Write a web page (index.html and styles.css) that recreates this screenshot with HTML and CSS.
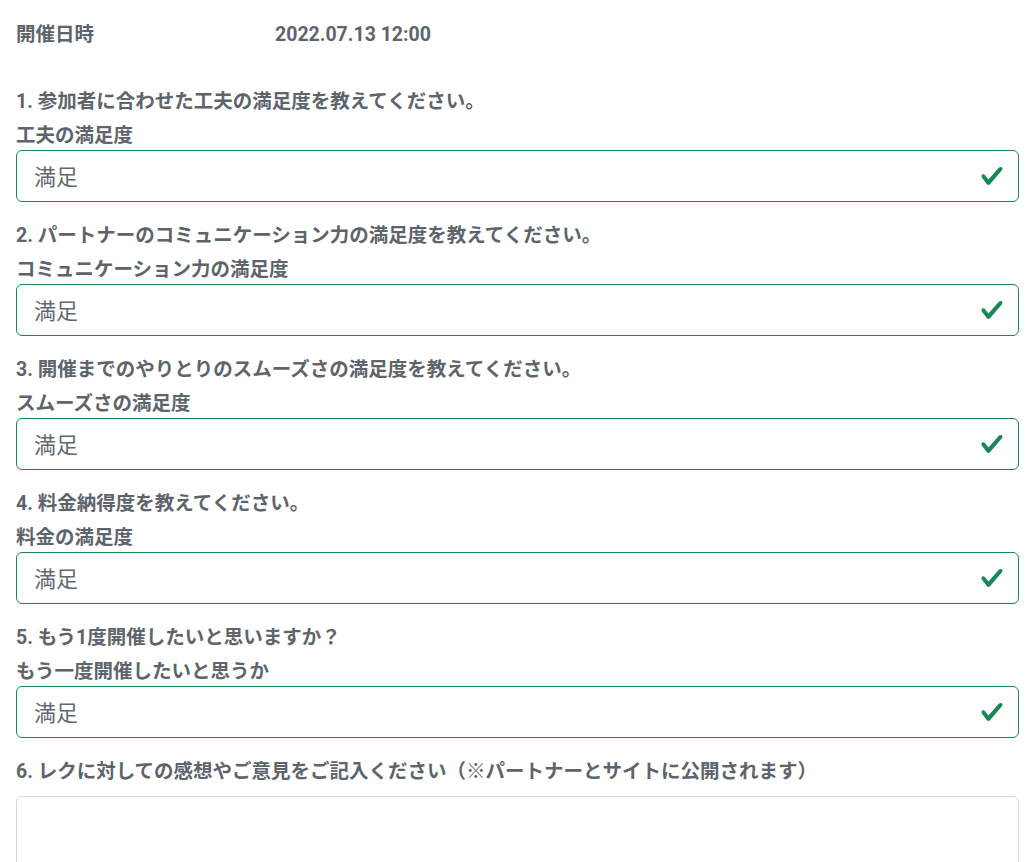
FILE: index.html
```html
<!DOCTYPE html>
<html lang="ja">
<head>
    <meta charset="UTF-8">
    <meta name="viewport" content="width=device-width, initial-scale=1.0">
    <title>アンケート</title>
    <link rel="stylesheet" href="styles.css">
</head>
<body>
    <div class="page">
        <div class="event-date">
            <span class="event-label">開催日時</span>
            <span class="event-value">2022.07.13 12:00</span>
        </div>

        <div class="question">
            <p class="question-title">1. 参加者に合わせた工夫の満足度を教えてください。</p>
            <label class="field-label">工夫の満足度</label>
            <div class="answer">
                <span>満足</span>
                <svg class="check" viewBox="0 0 8 8"><path d="M2.3 6.73.6 4.53c-.4-1.04.46-1.4 1.1-.8l1.1 1.4 3.4-3.8c.6-.63 1.6-.27 1.2.7l-4 4.6c-.43.5-.8.4-1.1.1z"/></svg>
            </div>
        </div>

        <div class="question">
            <p class="question-title">2. パートナーのコミュニケーション力の満足度を教えてください。</p>
            <label class="field-label">コミュニケーション力の満足度</label>
            <div class="answer">
                <span>満足</span>
                <svg class="check" viewBox="0 0 8 8"><path d="M2.3 6.73.6 4.53c-.4-1.04.46-1.4 1.1-.8l1.1 1.4 3.4-3.8c.6-.63 1.6-.27 1.2.7l-4 4.6c-.43.5-.8.4-1.1.1z"/></svg>
            </div>
        </div>

        <div class="question">
            <p class="question-title">3. 開催までのやりとりのスムーズさの満足度を教えてください。</p>
            <label class="field-label">スムーズさの満足度</label>
            <div class="answer">
                <span>満足</span>
                <svg class="check" viewBox="0 0 8 8"><path d="M2.3 6.73.6 4.53c-.4-1.04.46-1.4 1.1-.8l1.1 1.4 3.4-3.8c.6-.63 1.6-.27 1.2.7l-4 4.6c-.43.5-.8.4-1.1.1z"/></svg>
            </div>
        </div>

        <div class="question">
            <p class="question-title">4. 料金納得度を教えてください。</p>
            <label class="field-label">料金の満足度</label>
            <div class="answer">
                <span>満足</span>
                <svg class="check" viewBox="0 0 8 8"><path d="M2.3 6.73.6 4.53c-.4-1.04.46-1.4 1.1-.8l1.1 1.4 3.4-3.8c.6-.63 1.6-.27 1.2.7l-4 4.6c-.43.5-.8.4-1.1.1z"/></svg>
            </div>
        </div>

        <div class="question">
            <p class="question-title">5. もう1度開催したいと思いますか？</p>
            <label class="field-label">もう一度開催したいと思うか</label>
            <div class="answer">
                <span>満足</span>
                <svg class="check" viewBox="0 0 8 8"><path d="M2.3 6.73.6 4.53c-.4-1.04.46-1.4 1.1-.8l1.1 1.4 3.4-3.8c.6-.63 1.6-.27 1.2.7l-4 4.6c-.43.5-.8.4-1.1.1z"/></svg>
            </div>
        </div>

        <div class="question">
            <p class="question-title">6. レクに対しての感想やご意見をご記入ください（※パートナーとサイトに公開されます）</p>
            <textarea class="comment"></textarea>
        </div>
    </div>
</body>
</html>
```

FILE: styles.css
```css
body {
    margin: 0;
    padding: 0;
    background: #fff;
    font-family: Roboto, "Noto Sans CJK JP", sans-serif;
    color: #5d646c;
}
.page {
    padding: 21px 14px 0 16px;
}
.event-date {
    display: flex;
    font-size: 19.5px;
    font-weight: bold;
    line-height: 28px;
    margin-bottom: 39px;
}
.event-label {
    width: 259px;
}
.question {
    margin-bottom: 20px;
}
.question-title {
    margin: 0;
    font-size: 19.5px;
    font-weight: bold;
    line-height: 28px;
}
.field-label {
    display: block;
    margin-top: 6px;
    font-size: 19.5px;
    font-weight: bold;
    line-height: 28px;
}
.answer {
    display: flex;
    align-items: center;
    justify-content: space-between;
    box-sizing: border-box;
    height: 52px;
    padding: 0 14px 3px 17px;
    border: 1.5px solid #198754;
    border-radius: 6px;
    background: #fff;
    font-size: 22px;
    color: #62686f;
}
.check {
    width: 24px;
    height: 24px;
    margin-top: 3px;
    fill: #198754;
}
.comment {
    display: block;
    box-sizing: border-box;
    width: 100%;
    height: 140px;
    margin-top: 10px;
    border: 1.5px solid #d3d6da;
    border-radius: 6px;
    resize: none;
}
```
